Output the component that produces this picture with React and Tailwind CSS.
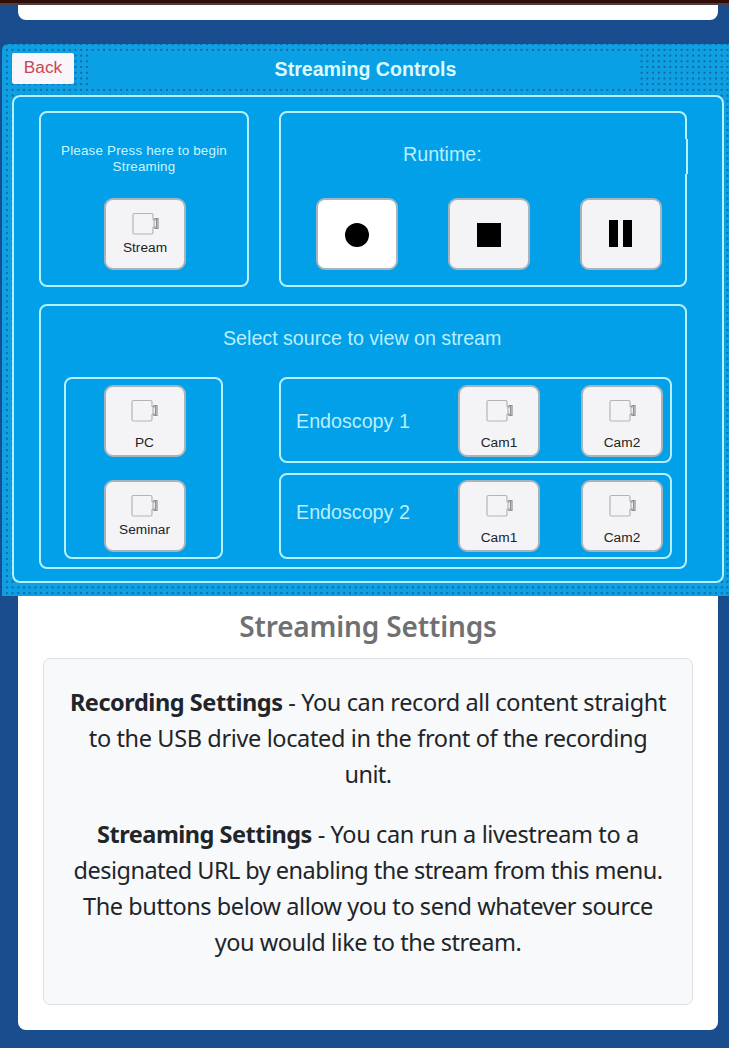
const frame = "border-2 border-[#b5f0ff] rounded-[8px]";

function CameraIcon() {
  return (
    <svg width="28" height="24" viewBox="0 0 28 24" fill="none" stroke="#b4b4b8" strokeWidth="1.2" className="shrink-0">
      <path d="M2.5 1.5H19.5Q21 1.5 21 3V7.500H22V15.500H21V20.500Q21 22 19.500 22H2.500Q1 22 1 20.500V3Q1 1.500 2.500 1.500Z" />
      <path d="M22 8H23V6.500H26V16.500H23V15H22" stroke="#919195" />
      <path d="M24.500 7V16" stroke="#919195" />
    </svg>
  );
}

function Key({ children, className = "bg-[#f4f4f7]" }) {
  return (
    <button className={`flex h-[72px] w-[82px] shrink-0 flex-col items-center rounded-[9px] border-2 border-[#a9b3bd] ${className}`}>
      {children}
    </button>
  );
}

function Source({ label, raised = false }) {
  return (
    <Key>
      <span className="mt-[12px] flex pl-[1px]"><CameraIcon /></span>
      <span className={`text-[13.700px] leading-4 text-[#222] ${raised ? "mt-[4px]" : "mt-[12px]"}`}>{label}</span>
    </Key>
  );
}

function Line({ children, className = "" }) {
  return <span className={`block whitespace-nowrap ${className}`}>{children}</span>;
}

const endoscopes = [
  { name: "Endoscopy 1", row: "pt-[6px]", title: "pt-[24px]" },
  { name: "Endoscopy 2", row: "pt-[5px]", title: "pt-[20px]" },
];

export default function App() {
  return (
    <div className="h-[1048px] w-[729px] overflow-hidden bg-[#194d8d] font-['Liberation_Sans',sans-serif]">
      <div className="h-[5px] border-b-2 border-[#4a3f42] bg-[#320c06]" />
      <div className="ml-[18px] mr-[11px] h-[15px] rounded-b-[8px] bg-white" />
      <div className="mt-[24px] ml-[2px] flex h-[552px] w-[727px] flex-col rounded-tl-[6px] bg-[#0f9fe3] bg-[radial-gradient(circle,#0b4f86_0.500px,transparent_1.050px)] bg-[length:5.720px_5.720px] bg-[position:2px_3px]">
        <div className="flex h-[51px] pt-[9px]">
          <div className="ml-[10px] flex h-[31px] w-[62px] items-center justify-center rounded-[2px] bg-[#f8f6fa] pb-px text-[17.300px] text-[#c8464f]">Back</div>
          <div className="ml-[15px] flex h-[34px] w-[551px] items-center justify-center bg-[#0aa0e5] pb-px pl-[2px] text-[19.600px] font-bold text-[#dcfbff]">
            <span>Streaming Controls</span>
          </div>
        </div>
        <div className={`ml-[10px] h-[488px] w-[712px] bg-[#02a0e8] ${frame}`}>
          <div className="ml-[25px] mt-[14px] flex gap-[30px]">
            <section className={`flex h-[176px] w-[210px] flex-col items-center text-center ${frame}`}>
              <p className="mt-[30px] text-[13.400px] leading-[15.500px] tracking-[0.200px] text-[#cdf6ff]">
                <Line>Please Press here to begin</Line>
                <Line>Streaming</Line>
              </p>
              <div className="mt-[24px] pl-[2px]"><Source label="Stream" raised /></div>
            </section>
            <section className={`relative h-[176px] w-[408px] ${frame}`}>
              <div className="absolute -right-[2px] top-[26px] h-[35px] w-[2px] bg-[#02a0e8]" />
              <div className="absolute -right-[3px] top-[26px] h-[35px] w-[2px] bg-[#b5f0ff]" />
              <p className="mt-[29px] pl-[122px] text-[19.700px] leading-[24px] text-[#b9efff]">Runtime:</p>
              <div className="mt-[32px] ml-[35px] flex gap-[50px]">
                <Key className="bg-white"><span className="mt-[23px] mr-px size-[24px] rounded-full bg-black" /></Key>
                <Key><span className="mt-[23px] mr-px size-[24px] bg-black" /></Key>
                <Key><span className="mt-[20px] mr-[2px] flex gap-[5px]"><i className="h-[27px] w-[9px] bg-black" /><i className="h-[27px] w-[9px] bg-black" /></span></Key>
              </div>
            </section>
          </div>
          <section className={`ml-[25px] mt-[17px] h-[265px] w-[648px] ${frame}`}>
            <h3 className="mt-[20px] pl-[182px] text-[19.650px] leading-[24px] text-[#b9efff]">Select source to view on stream</h3>
            <div className="mt-[27px] ml-[23px] flex gap-[56px]">
              <div className={`flex h-[182px] w-[159px] flex-col items-center gap-[23px] pl-[2px] pt-[6px] ${frame}`}>
                <Source label="PC" />
                <Source label="Seminar" raised />
              </div>
              <div className="flex flex-col gap-[10px]">
                {endoscopes.map(({ name, row, title }) => (
                  <div key={name} className={`flex h-[86px] w-[393px] ${row} ${frame}`}>
                    <span className={`w-[177px] pl-[15px] text-[19.700px] leading-[24px] text-[#b9efff] ${title}`}>{name}</span>
                    <div className="flex gap-[41px]"><Source label="Cam1" /><Source label="Cam2" /></div>
                  </div>
                ))}
              </div>
            </div>
          </section>
        </div>
      </div>
      <div className="ml-[18px] h-[434px] w-[700px] rounded-b-[8px] bg-white pt-[13px] text-center font-['Noto_Sans',sans-serif]">
        <h2 className="text-[28px] font-semibold leading-[34px] tracking-[-0.150px] text-[#6f7071]">Streaming Settings</h2>
        <div className="ml-[25px] mt-[15px] h-[347px] w-[650px] rounded-[7px] border border-[#dcdfe3] bg-[#f8f9fb] pt-[25px] text-[23.500px] leading-[36px] text-[#212529]">
          <p>
            <Line className="tracking-[-0.370px]"><b className="tracking-[-0.450px]">Recording Settings</b> - You can record all content straight</Line>
            <Line className="tracking-[-0.370px]">to the USB drive located in the front of the recording</Line>
            <Line className="tracking-[-0.600px]">unit.</Line>
          </p>
          <p className="mt-[24px]">
            <Line className="tracking-[-0.370px]"><b className="tracking-[-0.500px]">Streaming Settings</b> - You can run a livestream to a</Line>
            <Line className="tracking-[-0.530px]">designated URL by enabling the stream from this menu.</Line>
            <Line className="tracking-[-0.440px]">The buttons below allow you to send whatever source</Line>
            <Line className="tracking-[-0.450px]">you would like to the stream.</Line>
          </p>
        </div>
      </div>
    </div>
  );
}
